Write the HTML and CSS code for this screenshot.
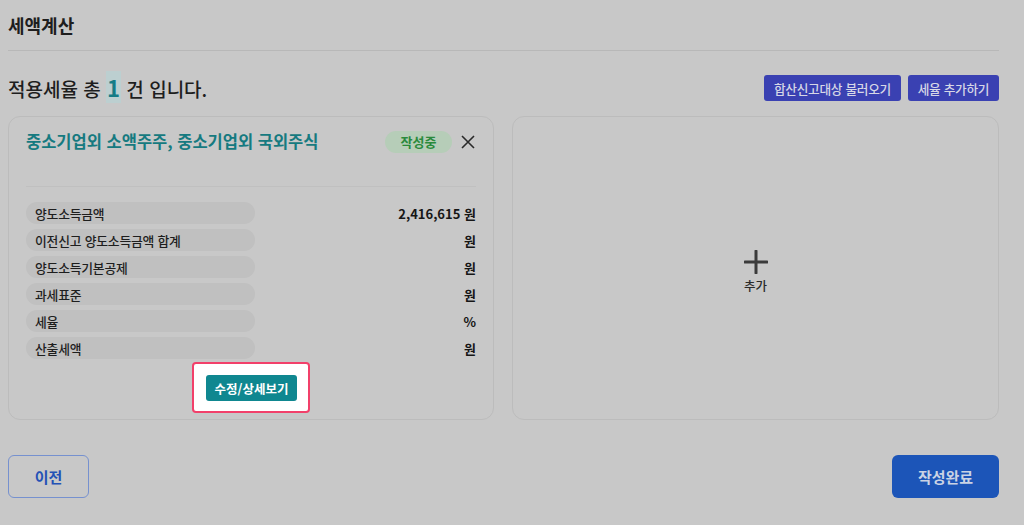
FILE: index.html
```html
<!DOCTYPE html>
<html lang="ko">
<head>
<meta charset="utf-8">
<link rel="stylesheet" href="styles.css">
</head>
<body>
<div class="page">
  <header class="head">
    <h1 class="title">세액계산</h1>
  </header>
  <div class="summary">
    <p class="count">적용세율 총 <span class="num">1</span> 건 입니다.</p>
    <div class="actions">
      <button class="btn-indigo btn-load">합산신고대상 불러오기</button>
      <button class="btn-indigo btn-add">세율 추가하기</button>
    </div>
  </div>
  <div class="cards">
    <section class="card">
      <div class="card-head">
        <h2 class="card-title">중소기업외 소액주주, 중소기업외 국외주식</h2>
        <span class="badge">작성중</span>
        <svg class="close" width="14" height="14" viewBox="0 0 14 14"><path d="M1 1L13 13M13 1L1 13" stroke="#2a2a2a" stroke-width="1.6" fill="none"/></svg>
      </div>
      <div class="sep"></div>
      <ul class="rows">
        <li class="row"><span class="label">양도소득금액</span><span class="val">2,416,615 원</span></li>
        <li class="row"><span class="label">이전신고 양도소득금액 합계</span><span class="val">원</span></li>
        <li class="row"><span class="label">양도소득기본공제</span><span class="val">원</span></li>
        <li class="row"><span class="label">과세표준</span><span class="val">원</span></li>
        <li class="row"><span class="label">세율</span><span class="val">%</span></li>
        <li class="row"><span class="label">산출세액</span><span class="val">원</span></li>
      </ul>
      <div class="focus">
        <button class="btn-teal">수정/상세보기</button>
      </div>
    </section>
    <section class="card card-add">
      <svg class="plus" width="24" height="24" viewBox="0 0 24 24"><path d="M12 1V23M1 12H23" stroke="#3b3b3b" stroke-width="3" stroke-linecap="round" fill="none"/></svg>
      <span class="add-text">추가</span>
    </section>
  </div>
  <div class="footer">
    <button class="btn-prev">이전</button>
    <button class="btn-done">작성완료</button>
  </div>
</div>
</body>
</html>
```

FILE: styles.css
```css
* { box-sizing: border-box; }
html, body { margin: 0; padding: 0; }
body {
  background: #c8c8c8;
  font-family: "Noto Sans CJK KR", "Noto Sans", sans-serif;
  color: #222;
}
.page {
  width: 991px;
  margin-left: 8px;
}
.head {
  height: 51px;
  border-bottom: 1px solid #b8b8b8;
  display: flex;
  align-items: center;
}
.title {
  margin: 0;
  font-size: 18px;
  font-weight: 700;
  color: #1e1e1e;
  line-height: 1;
}
.summary {
  margin-top: 24px;
  height: 26px;
  display: flex;
  align-items: center;
  justify-content: space-between;
}
.count {
  margin: 0;
  font-size: 19px;
  font-weight: 500;
  color: #1e1e1e;
  line-height: 26px;
}
.num {
  color: #167c86;
  font-weight: 700;
  background: #bccfd0;
  padding: 0 1px;
  font-size: 22px;
}
.actions { display: flex; gap: 7px; }
.btn-indigo {
  height: 26px;
  border: 0;
  border-radius: 3px;
  background: #3a41b2;
  color: #d6d7e6;
  font-family: inherit;
  font-size: 12.7px;
  font-weight: 500;
  letter-spacing: -0.3px;
  padding: 0;
  white-space: nowrap;
  cursor: pointer;
}
.btn-load { width: 137px; }
.btn-add { width: 91px; }
.cards {
  margin-top: 15px;
  display: grid;
  grid-template-columns: 486px 487px;
  gap: 18px;
}
.card {
  height: 304px;
  border: 1px solid #bcbcbc;
  border-radius: 12px;
  padding: 0 17px;
  display: flex;
  flex-direction: column;
}
.card-head {
  margin-top: 13px;
  height: 23px;
  display: flex;
  align-items: center;
}
.card-title {
  margin: 0;
  flex: 1;
  font-size: 16.5px;
  font-weight: 700;
  color: #167a80;
  line-height: 1;
}
.badge {
  width: 67px;
  height: 22px;
  border-radius: 11px;
  background: #b6cdb8;
  color: #2a8a3c;
  font-size: 13px;
  font-weight: 700;
  display: flex;
  align-items: center;
  justify-content: center;
}
.close { margin-left: 9px; margin-right: 1px; }
.sep {
  margin-top: 33px;
  border-top: 1px solid #c0c0c0;
}
.rows {
  list-style: none;
  margin: 15px 0 0;
  padding: 0;
  display: flex;
  flex-direction: column;
  gap: 5px;
}
.row {
  height: 22px;
  display: flex;
  align-items: center;
  justify-content: space-between;
}
.label {
  width: 229px;
  height: 22px;
  border-radius: 11px;
  background: #c0c0c0;
  padding-left: 9px;
  font-size: 12.8px;
  font-weight: 500;
  color: #1e1e1e;
  display: flex;
  align-items: center;
  letter-spacing: -0.2px;
}
.val {
  font-size: 13px;
  font-weight: 700;
  color: #161616;
}
.focus {
  align-self: center;
  margin-top: 3px;
  background: #fff;
  border: 2px solid #f2406a;
  border-radius: 4px;
  padding: 11px 11px 10px 12px;
  display: flex;
}
.btn-teal {
  width: 91px;
  height: 26px;
  border: 0;
  border-radius: 3px;
  background: #0f8790;
  color: #fff;
  font-family: inherit;
  font-size: 12.5px;
  font-weight: 700;
  padding: 0;
  white-space: nowrap;
}
.card-add {
  align-items: center;
  justify-content: center;
  gap: 2px;
  padding-top: 8px;
}
.add-text {
  font-size: 12.5px;
  font-weight: 500;
  color: #2a2a2a;
}
.footer {
  margin-top: 35px;
  display: flex;
  justify-content: space-between;
}
.btn-prev {
  width: 81px;
  height: 43px;
  border: 1px solid #7691cf;
  border-radius: 6px;
  background: transparent;
  color: #2452b6;
  font-family: inherit;
  font-size: 15px;
  font-weight: 700;
}
.btn-done {
  width: 107px;
  height: 43px;
  border: 0;
  border-radius: 6px;
  background: #1c55b8;
  color: #cad3e4;
  font-family: inherit;
  font-size: 15px;
  font-weight: 700;
}
```
